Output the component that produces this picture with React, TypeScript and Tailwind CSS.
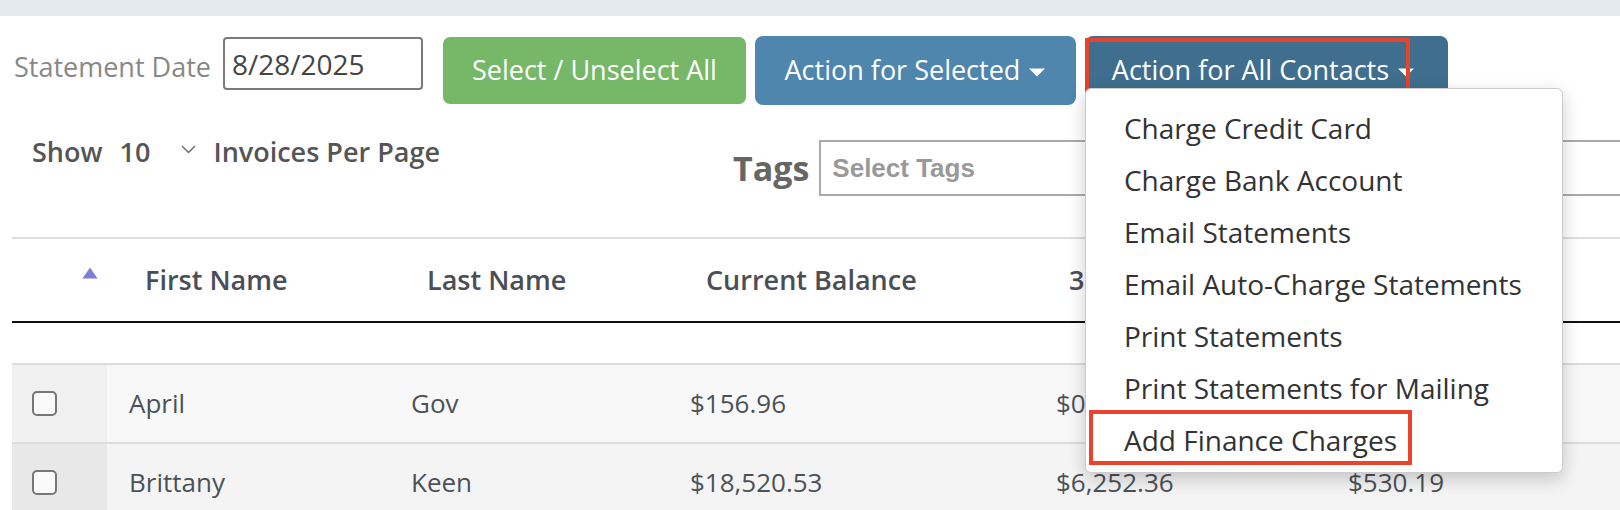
import React from "react";

const menuItems = [
  "Charge Credit Card",
  "Charge Bank Account",
  "Email Statements",
  "Email Auto-Charge Statements",
  "Print Statements",
  "Print Statements for Mailing",
  "Add Finance Charges",
];

const rows = [
  { first: "April", last: "Gov", balance: "$156.96", d30: "$0.00", d60: "", checkBg: "bg-[#f0f0f0]", bg: "bg-[#f8f8f8]" },
  { first: "Brittany", last: "Keen", balance: "$18,520.53", d30: "$6,252.36", d60: "$530.19", checkBg: "bg-[#e8e8e8]", bg: "bg-[#f4f4f4]" },
];

function Caret() {
  return (
    <svg width="18" height="9" viewBox="0 0 18 9" className="ml-[8px] mt-[4px]">
      <path d="M1 0.5 L17 0.5 L9 8.5 Z" fill="#ffffff" />
    </svg>
  );
}

export default function App() {
  return (
    <div className="relative w-[1620px] h-[510px] overflow-hidden bg-white font-['Open_Sans',sans-serif]">
      <div className="h-[16px] bg-[#e4ebee]" />

      <div className="pl-[12px]">
        {/* toolbar */}
        <div className="mt-[20px] flex items-start pl-[2px]">
          <div className="mt-[5px] h-[53px] flex items-center text-[27px] text-[#888] shrink-0">Statement Date</div>
          <div className="ml-[12px] mt-[1px] w-[200px] h-[53px] border-2 border-[#7a7a7a] rounded-[4px] flex items-center pl-[7px] text-[28px] text-[#444] shrink-0">
            8/28/2025
          </div>
          <button className="ml-[20px] mt-[1px] w-[303px] h-[67px] rounded-[7px] bg-[#76b768] text-white text-[27px] flex items-center justify-center shrink-0">
            Select / Unselect All
          </button>
          <button className="ml-[9px] w-[321px] h-[69px] rounded-[8px] bg-[#4e86ae] text-white text-[27px] flex items-center justify-center shrink-0">
            Action for Selected
            <Caret />
          </button>
          <div className="relative ml-[9px] shrink-0">
            <button className="w-[363px] h-[69px] rounded-[8px] bg-[#3f6e8e] text-white text-[27px] flex items-center justify-center pr-[6px]">
              Action for All Contacts
              <Caret />
            </button>
            <div className="absolute left-0 top-[2px] w-[325px] h-[55px] border-4 border-[#e8432b]" />

            {/* dropdown menu */}
            <div className="absolute left-0 top-[52px] z-10 w-[478px] h-[385px] bg-white border border-[#cccccc] rounded-[6px] shadow-[0_6px_18px_rgba(0,0,0,0.2)] pt-[13px]">
              {menuItems.map((item) => (
                <div key={item} className="h-[52px] flex items-center pl-[38px] text-[28px] text-[#333]">
                  {item}
                </div>
              ))}
              <div className="absolute left-[3px] top-[321px] w-[323px] h-[55px] border-4 border-[#e8432b]" />
            </div>
          </div>
        </div>

        {/* show / tags */}
        <div className="mt-[31px] flex items-start">
          <div className="w-[721px] shrink-0 pl-[20px] h-[32px] flex items-center text-[27px] font-semibold text-[#555]">
            <span>Show</span>
            <span className="ml-[17px]">10</span>
            <svg width="15" height="9" viewBox="0 0 15 9" className="ml-[31px] -mt-[6px]">
              <path d="M1 1 L7.5 7.5 L14 1" fill="none" stroke="#666" strokeWidth="1.3" />
            </svg>
            <span className="ml-[17px]">Invoices Per Page</span>
          </div>
          <div className="mt-[4px] flex items-center shrink-0">
            <span className="text-[34px] font-bold text-[#666]">Tags</span>
            <div className="ml-[10px] w-[820px] h-[56px] border-2 border-[#aaaaaa] flex items-center pl-[11px] font-['Liberation_Sans',sans-serif] font-bold text-[26px] text-[#999]">
              Select Tags
            </div>
          </div>
        </div>

        <div className="mt-[41px] h-[2px] bg-[#dddddd]" />

        {/* table header */}
        <div className="grid grid-cols-[95px_282px_279px_366px_292px_1fr] h-[82px] text-[27px] font-semibold text-[#4a4e55]">
          <div className="flex items-center pl-[70px]">
            <svg width="16" height="12" viewBox="0 0 16 12" className="-mt-[14px]">
              <path d="M8 0.5 L15.5 11.5 L0.5 11.5 Z" fill="#7b7fd6" />
            </svg>
          </div>
          <div className="flex items-center pl-[38px]">First Name</div>
          <div className="flex items-center pl-[38px]">Last Name</div>
          <div className="flex items-center pl-[38px]">Current Balance</div>
          <div className="flex items-center pl-[35px]">30 Days</div>
          <div className="flex items-center pl-[38px]">60 Days</div>
        </div>
        <div className="h-[2px] bg-[#111]" />
        <div className="h-[40px]" />

        {/* rows */}
        {rows.map((r) => (
          <div
            key={r.first}
            className="grid grid-cols-[95px_282px_279px_366px_292px_1fr] h-[79px] border-t-2 border-[#dddddd] text-[26px] text-[#4c5158]"
          >
            <div className={`${r.checkBg} flex items-center pl-[20px]`}>
              <div className="w-[25px] h-[25px] border-2 border-[#777] rounded-[5px] bg-[#fafafa]" />
            </div>
            <div className={`${r.bg} flex items-center pl-[22px]`}>{r.first}</div>
            <div className={`${r.bg} flex items-center pl-[22px]`}>{r.last}</div>
            <div className={`${r.bg} flex items-center pl-[22px]`}>{r.balance}</div>
            <div className={`${r.bg} flex items-center pl-[22px]`}>{r.d30}</div>
            <div className={`${r.bg} flex items-center pl-[22px]`}>{r.d60}</div>
          </div>
        ))}
      </div>
    </div>
  );
}
